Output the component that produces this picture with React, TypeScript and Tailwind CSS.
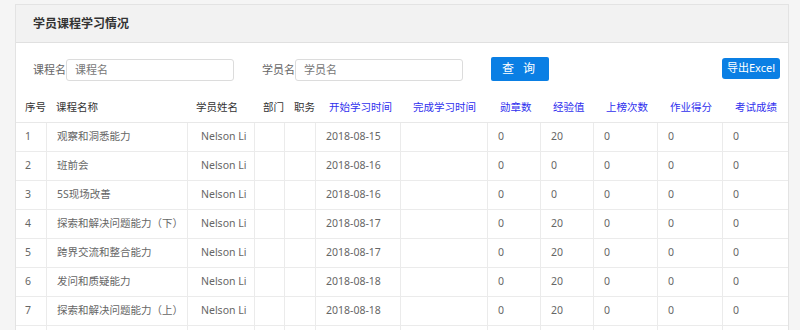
import React from "react";

const cols = "grid grid-cols-[30px_141px_67px_30px_31px_85px_87px_53px_53px_64px_65px_66px]";

const headers: { t: string; pl: string; blue?: boolean }[] = [
  { t: "序号", pl: "pl-[9px]" },
  { t: "课程名称", pl: "pl-[10px]" },
  { t: "学员姓名", pl: "pl-[9px]" },
  { t: "部门", pl: "pl-[9px]" },
  { t: "职务", pl: "pl-[10px]" },
  { t: "开始学习时间", pl: "pl-[14px]", blue: true },
  { t: "完成学习时间", pl: "pl-[13px]", blue: true },
  { t: "勋章数", pl: "pl-[13px]", blue: true },
  { t: "经验值", pl: "pl-[13px]", blue: true },
  { t: "上榜次数", pl: "pl-[13px]", blue: true },
  { t: "作业得分", pl: "pl-[13px]", blue: true },
  { t: "考试成绩", pl: "pl-[13px]", blue: true },
];

const rows: string[][] = [
  ["1", "观察和洞悉能力", "Nelson Li", "", "", "2018-08-15", "", "0", "20", "0", "0", "0"],
  ["2", "班前会", "Nelson Li", "", "", "2018-08-16", "", "0", "0", "0", "0", "0"],
  ["3", "5S现场改善", "Nelson Li", "", "", "2018-08-16", "", "0", "0", "0", "0", "0"],
  ["4", "探索和解决问题能力（下）", "Nelson Li", "", "", "2018-08-17", "", "0", "20", "0", "0", "0"],
  ["5", "跨界交流和整合能力", "Nelson Li", "", "", "2018-08-17", "", "0", "20", "0", "0", "0"],
  ["6", "发问和质疑能力", "Nelson Li", "", "", "2018-08-18", "", "0", "20", "0", "0", "0"],
  ["7", "探索和解决问题能力（上）", "Nelson Li", "", "", "2018-08-18", "", "0", "20", "0", "0", "0"],
  ["8", "", "", "", "", "", "", "", "", "", "", ""],
];

const cellPl = [
  "pl-[9px]",
  "pl-[10px]",
  "pl-[13px]",
  "pl-[9px]",
  "pl-[9px]",
  "pl-[10px]",
  "pl-[10px]",
  "pl-[10px]",
  "pl-[10px]",
  "pl-[10px]",
  "pl-[10px]",
  "pl-[10px]",
];

export default function App() {
  return (
    <div
      className="w-[800px] h-[330px] overflow-hidden bg-[#f5f5f5] pt-[4px] pl-[15px]"
      style={{ fontFamily: '"Noto Sans", "Noto Sans CJK SC", sans-serif' }}
    >
      <div className="w-[774px] h-[400px] bg-white border border-[#e3e3e3]">
        <div className="h-[38px] bg-[#f2f2f2] border-b border-[#e0e0e0] flex items-center pl-[17px]">
          <span className="text-[12px] font-bold text-[#333]">学员课程学习情况</span>
        </div>
        <div className="h-[51px] flex items-start pt-[15px] text-[11px] text-[#666]">
          <div className="flex items-center pl-[17px] pt-[1px]">
            <span>课程名</span>
            <div className="w-[168px] h-[22px] border border-[#dcdcdc] rounded-[3px] flex items-center pl-[8px] text-[#777]">
              课程名
            </div>
          </div>
          <div className="flex items-center ml-[28px] pt-[1px]">
            <span>学员名</span>
            <div className="w-[168px] h-[22px] border border-[#dcdcdc] rounded-[3px] flex items-center pl-[8px] text-[#777]">
              学员名
            </div>
          </div>
          <div className="ml-[28px] -mt-[1px] w-[58px] h-[24px] bg-[#0a7fe4] rounded-[2px] flex items-center justify-center text-white text-[12px] tracking-[3px]">
            查 询
          </div>
          <div className="ml-auto mr-[8px] w-[58px] h-[21px] bg-[#0a7fe4] rounded-[3px] flex items-center justify-center text-white text-[11px]">
            导出Excel
          </div>
        </div>
        <div className="text-[10.5px]">
          <div className={`${cols} h-[29px] border-b border-[#e8e8e8] items-center`}>
            {headers.map((h, i) => (
              <div
                key={i}
                className={`${h.pl} whitespace-nowrap ${h.blue ? "text-[#3030ee]" : "text-[#333]"}`}
              >
                {h.t}
              </div>
            ))}
          </div>
          {rows.map((r, ri) => (
            <div key={ri} className={`${cols} h-[29px] border-b border-[#ebebeb]`}>
              {r.map((c, ci) => (
                <div
                  key={ci}
                  className={`${cellPl[ci]} flex items-center whitespace-nowrap text-[#666] ${ci > 0 ? "border-l border-[#ebebeb]" : ""} ${ci === 2 ? "text-[#555]" : ""}`}
                >
                  {ri === 7 ? "" : c}
                </div>
              ))}
            </div>
          ))}
        </div>
      </div>
    </div>
  );
}
